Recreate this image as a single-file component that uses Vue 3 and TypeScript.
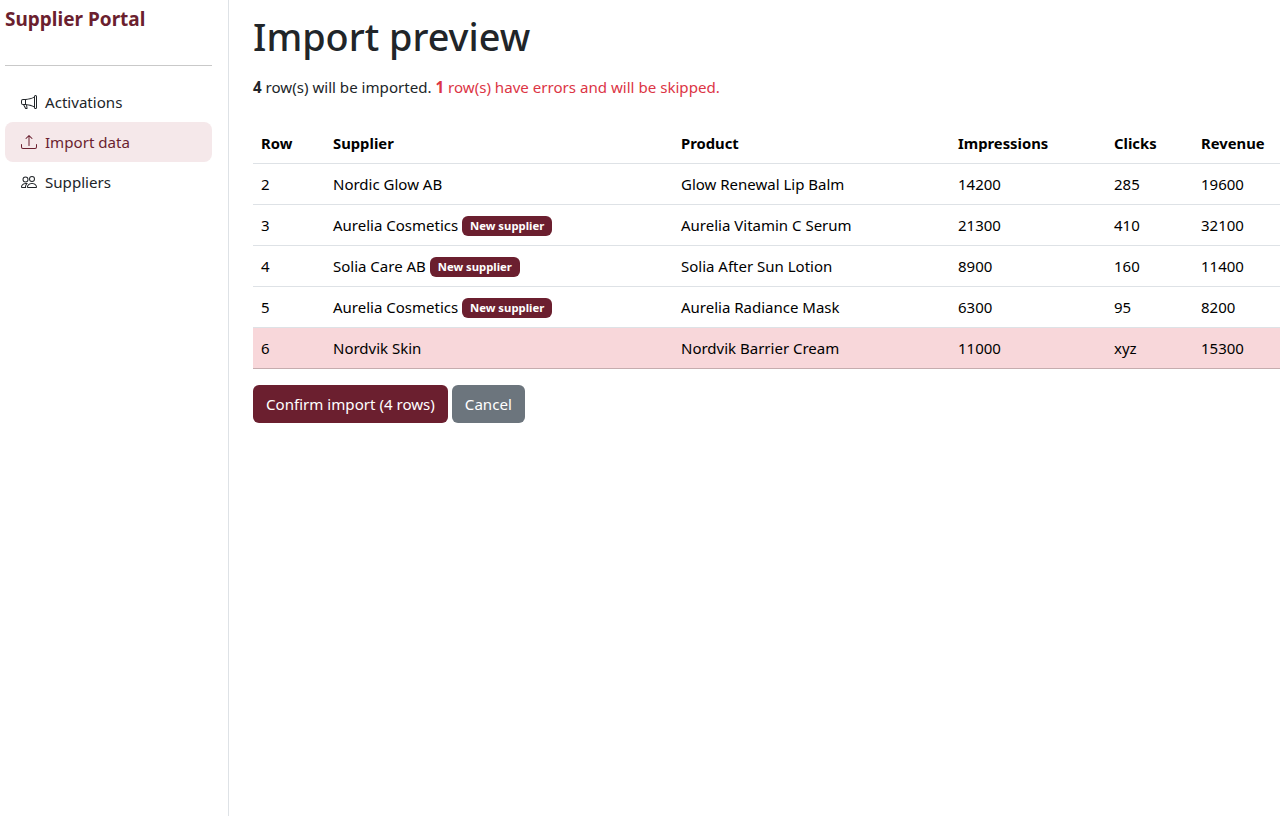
<script setup lang="ts">
interface Row { row: number; supplier: string; isNew: boolean; product: string; impressions: string; clicks: string; revenue: string; error?: boolean }
const rows: Row[] = [
  { row: 2, supplier: 'Nordic Glow AB', isNew: false, product: 'Glow Renewal Lip Balm', impressions: '14200', clicks: '285', revenue: '19600' },
  { row: 3, supplier: 'Aurelia Cosmetics', isNew: true, product: 'Aurelia Vitamin C Serum', impressions: '21300', clicks: '410', revenue: '32100' },
  { row: 4, supplier: 'Solia Care AB', isNew: true, product: 'Solia After Sun Lotion', impressions: '8900', clicks: '160', revenue: '11400' },
  { row: 5, supplier: 'Aurelia Cosmetics', isNew: true, product: 'Aurelia Radiance Mask', impressions: '6300', clicks: '95', revenue: '8200' },
  { row: 6, supplier: 'Nordvik Skin', isNew: false, product: 'Nordvik Barrier Cream', impressions: '11000', clicks: 'xyz', revenue: '15300', error: true },
]
</script>

<template>
  <div class="layout">
    <aside class="sidebar">
      <div class="brand">Supplier Portal</div>
      <hr class="rule" />
      <nav class="nav">
        <a class="link">
          <svg class="icon" viewBox="0 0 16 16" fill="currentColor"><path d="M13 2.5a1.5 1.5 0 0 1 3 0v11a1.5 1.5 0 0 1-3 0v-.214c-2.162-1.241-4.49-1.843-6.912-2.083l.405 2.712A1 1 0 0 1 5.51 15.1h-.548a1 1 0 0 1-.916-.599l-1.85-3.49a68.14 68.14 0 0 0-.202-.003A2.014 2.014 0 0 1 0 9V7a2.02 2.02 0 0 1 1.992-2.013 74.663 74.663 0 0 0 2.483-.075c3.043-.154 6.148-.849 8.525-2.199V2.5zm1 0v11a.5.5 0 0 0 1 0v-11a.5.5 0 0 0-1 0zm-1 1.35c-2.344 1.205-5.209 1.842-8 2.033v4.233c.18.01.359.022.537.036 2.568.189 5.093.744 7.463 1.993V3.85zm-9 6.215v-4.13a95.09 95.09 0 0 1-1.992.052A1.02 1.02 0 0 0 1 7v2c0 .55.448 1.002 1.006 1.009A60.49 60.49 0 0 1 4 10.065zm-.657.975 1.609 3.037.01.024h.548l-.002-.014-.443-2.966a68.019 68.019 0 0 0-1.722-.082z"/></svg>
          <span>Activations</span>
        </a>
        <a class="link active">
          <svg class="icon" viewBox="0 0 16 16" fill="currentColor"><path d="M.5 9.9a.5.5 0 0 1 .5.5v2.5a1 1 0 0 0 1 1h12a1 1 0 0 0 1-1v-2.5a.5.5 0 0 1 1 0v2.5a2 2 0 0 1-2 2H2a2 2 0 0 1-2-2v-2.5a.5.5 0 0 1 .5-.5z"/><path d="M7.646 1.146a.5.5 0 0 1 .708 0l3 3a.5.5 0 0 1-.708.708L8.5 2.707V11.5a.5.5 0 0 1-1 0V2.707L5.354 4.854a.5.5 0 1 1-.708-.708l3-3z"/></svg>
          <span>Import data</span>
        </a>
        <a class="link">
          <svg class="icon" viewBox="0 0 16 16" fill="currentColor"><path d="M15 14s1 0 1-1-1-4-5-4-5 3-5 4 1 1 1 1h8Zm-7.978-1A.261.261 0 0 1 7 12.996c.001-.264.167-1.03.76-1.72C8.312 10.629 9.282 10 11 10c1.717 0 2.687.63 3.24 1.276.593.69.758 1.457.76 1.72l-.008.002a.274.274 0 0 1-.014.002H7.022ZM11 7a2 2 0 1 0 0-4 2 2 0 0 0 0 4Zm3-2a3 3 0 1 1-6 0 3 3 0 0 1 6 0ZM6.936 9.28a5.88 5.88 0 0 0-1.23-.247A7.35 7.35 0 0 0 5 9c-4 0-5 3-5 4 0 .667.333 1 1 1h4.216A2.238 2.238 0 0 1 5 13c0-1.01.377-2.042 1.09-2.904.243-.294.526-.569.846-.816ZM4.92 10A5.493 5.493 0 0 0 4 13H1c0-.26.164-1.03.76-1.724.545-.636 1.492-1.256 3.16-1.275ZM1.5 5.5a3 3 0 1 1 6 0 3 3 0 0 1-6 0Zm3-2a2 2 0 1 0 0 4 2 2 0 0 0 0-4Z"/></svg>
          <span>Suppliers</span>
        </a>
      </nav>
    </aside>
    <main class="main">
      <h1 class="title">Import preview</h1>
      <p class="summary"><strong>4</strong> row(s) will be imported. <span class="danger"><strong>1</strong> row(s) have errors and will be skipped.</span></p>
      <table class="table">
        <colgroup>
          <col class="c1" /><col class="c2" /><col class="c3" /><col class="c4" /><col class="c5" /><col class="c6" />
        </colgroup>
        <thead>
          <tr>
            <th>Row</th><th>Supplier</th><th>Product</th><th>Impressions</th><th>Clicks</th><th>Revenue</th>
          </tr>
        </thead>
        <tbody>
          <tr v-for="r in rows" :key="r.row" :class="{ error: r.error }">
            <td>{{ r.row }}</td>
            <td>{{ r.supplier }} <span v-if="r.isNew" class="badge">New supplier</span></td>
            <td>{{ r.product }}</td>
            <td>{{ r.impressions }}</td>
            <td>{{ r.clicks }}</td>
            <td>{{ r.revenue }}</td>
          </tr>
        </tbody>
      </table>
      <div class="actions">
        <button class="btn primary">Confirm import (4 rows)</button>
        <button class="btn secondary">Cancel</button>
      </div>
    </main>
  </div>
</template>

<style>
html, body { margin: 0; background: #fff; }
</style>

<style scoped>
.layout {
  display: flex;
  min-height: 816px;
  font-family: "Noto Sans", "Open Sans", sans-serif;
  font-size: 15.1px;
  line-height: 24px;
  color: #212529;
}
.sidebar {
  width: 229px;
  flex: none;
  box-sizing: border-box;
  padding: 5px 16px 0 5px;
  border-right: 1px solid #dee2e6;
}
.brand {
  font-size: 19px;
  font-weight: 700;
  line-height: 29px;
  color: #6b1f2f;
}
.rule {
  margin: 31px 0 16px;
  border: 0;
  border-top: 1px solid #c9c9c9;
}
.nav { display: flex; flex-direction: column; }
.link {
  display: flex;
  align-items: center;
  gap: 8px;
  height: 40px;
  padding: 0 16px;
  border-radius: 8px;
  color: #212529;
}
.link.active { background: #f5e8ea; color: #6b1f2f; }
.icon { width: 16px; height: 16px; flex: none; }
.main {
  flex: 1;
  min-width: 0;
  padding: 13px 0 0 24px;
}
.title {
  margin: 0 0 14px;
  font-size: 37.8px;
  font-weight: 500;
  line-height: 48px;
}
.summary { margin: 0 0 24px; line-height: 24px; }
.danger { color: #dc3545; }
.table {
  width: 100%;
  table-layout: fixed;
  border-collapse: collapse;
  color: #000;
}
.c1 { width: 72px; }
.c2 { width: 348px; }
.c3 { width: 277px; }
.c4 { width: 156px; }
.c5 { width: 87px; }
th, td {
  padding: 8px;
  text-align: left;
  border-bottom: 1px solid #dee2e6;
  white-space: nowrap;
  height: 24px;
}
th { font-weight: 700; font-size: 14.8px; }
td { font-size: 15px; }
.error td { background: #f8d7da; border-bottom-color: #c6acae; }
.badge {
  display: inline-block;
  padding: 4px 8px;
  border-radius: 6px;
  background: #6b1f2f;
  color: #fff;
  font-size: 11.3px;
  font-weight: 700;
  line-height: 12px;
  vertical-align: baseline;
  position: relative;
  top: -1px;
}
.actions { display: flex; gap: 4px; margin-top: 16px; }
.btn {
  height: 38px;
  padding: 0 13px;
  border: 0;
  border-radius: 6px;
  color: #fff;
  font: inherit;
}
.primary { background: #6b1f2f; }
.secondary { background: #6c757d; }
</style>
